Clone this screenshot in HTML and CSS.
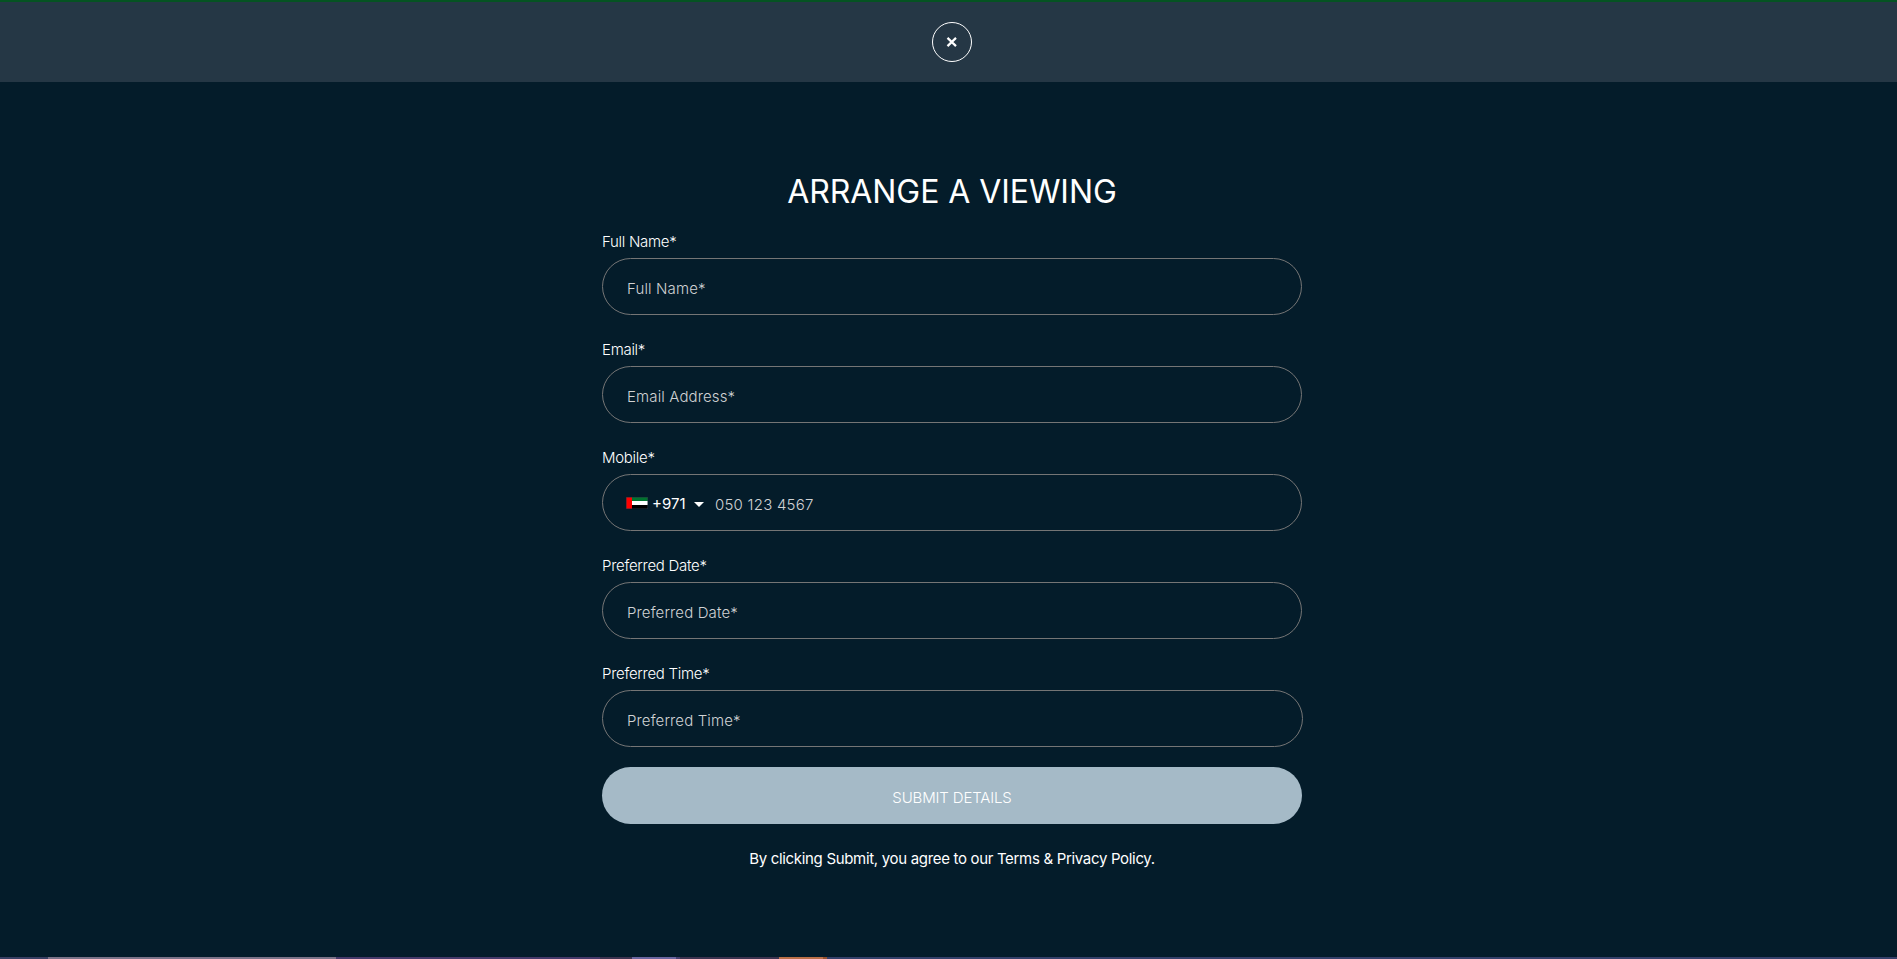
FILE: index.html
```html
<!DOCTYPE html>
<html lang="en">
<head>
<meta charset="utf-8">
<title>Arrange a Viewing</title>
<link rel="stylesheet" href="styles.css">
</head>
<body>
<header class="topbar">
  <button class="close" type="button" aria-label="Close">
    <svg width="12" height="12" viewBox="0 0 12 12"><path d="M1.500 1.900 10 10.100M10 1.900 1.500 10.100" stroke="#fff" stroke-width="2.200" fill="none"/></svg>
  </button>
</header>
<main class="panel">
  <h1 class="title"><span class="t-title">ARRANGE A VIEWING</span></h1>
  <form class="form">
    <div class="field">
      <label class="label">Full Name*</label>
      <div class="box"><span class="placeholder">Full Name*</span></div>
    </div>
    <div class="field">
      <label class="label">Email*</label>
      <div class="box"><span class="placeholder">Email Address*</span></div>
    </div>
    <div class="field">
      <label class="label">Mobile*</label>
      <div class="box phone">
        <svg class="flag" width="22" height="12" viewBox="0 0 22 12"><path fill="#26353f" d="M0 0h22v12H0z"/><path fill="#00732f" d="M6 .5h15.500v3.500H6z"/><path fill="#fff" d="M6 4h15.500v4H6z"/><path fill="#000" d="M6 8h15.500v3.500H6z"/><path fill="#f00" d="M.5.5H6v11H.5z"/></svg>
        <span class="code">+971</span>
        <svg class="caret" width="10" height="5" viewBox="0 0 10 5"><path fill="#fff" d="M0 0h10L5 5z"/></svg>
        <span class="placeholder number">050 123 4567</span>
      </div>
    </div>
    <div class="field">
      <label class="label">Preferred Date*</label>
      <div class="box"><span class="placeholder">Preferred Date*</span></div>
    </div>
    <div class="field">
      <label class="label">Preferred Time*</label>
      <div class="box wide"><span class="placeholder">Preferred Time*</span></div>
    </div>
    <button class="submit" type="button">SUBMIT DETAILS</button>
  </form>
  <p class="terms">By clicking Submit, you agree to our Terms &amp; Privacy Policy.</p>
</main>
<footer class="strip"></footer>
</body>
</html>
```
FILE: styles.css
```css
* { box-sizing: border-box; }
body {
  margin: 0;
  height: 959px;
  overflow: hidden;
  display: flex;
  flex-direction: column;
  background: #041c2a;
  color: #fff;
  font-family: Inter, "Liberation Sans", sans-serif;
  font-size: 15px;
  font-weight: 300;
}
.topbar {
  height: 82px;
  flex: none;
  padding: 20px 0 0 7px;
  display: flex;
  justify-content: center;
  background: #253745;
  border-top: 2px solid #055322;
}
.close {
  width: 40px;
  height: 40px;
  padding: 0;
  display: flex;
  align-items: center;
  justify-content: center;
  border: 1.500px solid #fff;
  border-radius: 50%;
  background: none;
}
.panel {
  flex: 1;
  padding: 89px 0 0 7px;
  display: flex;
  flex-direction: column;
  align-items: center;
}
.title {
  margin: 0;
  height: 57px;
  line-height: 41px;
  font-size: 32px;
  font-weight: 400;
  letter-spacing: -0.070px;
  white-space: nowrap;
}
.form { width: 700px; }
.field { height: 108px; }
.label {
  display: block;
  height: 30px;
  padding-top: 4px;
  line-height: 20px;
  letter-spacing: -0.290px;
  white-space: nowrap;
}
.box {
  height: 57px;
  padding: 4px 24px 0;
  display: flex;
  align-items: center;
  border: 1px solid #757575;
  border-radius: 29px;
  white-space: nowrap;
}
.wide { width: 701px; }
.placeholder { color: #d0d2d4; letter-spacing: 0.130px; }
.number { letter-spacing: 0.230px; }
.phone { padding-left: 23px; }
.flag { margin-top: -3px; }
.code { width: 35px; margin: -2px 0 0 4px; font-weight: 400; }
.caret { margin: -1px 11px 0 7px; }
.submit {
  display: flex;
  align-items: center;
  justify-content: center;
  width: 700px;
  height: 57px;
  margin-top: -1px;
  padding: 3px 0 0;
  border: 0;
  border-radius: 29px;
  background: #a5bac7;
  color: #fff;
  font: inherit;
  letter-spacing: -0.150px;
}
.terms {
  margin: 25px 0 0;
  line-height: 20px;
  font-weight: 400;
  letter-spacing: -0.320px;
  white-space: nowrap;
}
.strip {
  height: 2px;
  flex: none;
  background: linear-gradient(90deg, #383f63 48px, #7b7389 48px 336px, #45396a 336px 600px, #3c3350 600px 632px, #6a66a0 632px 676px, #453f70 676px 680px, #3c3350 680px 779px, #bb7048 779px 823px, #96522f 823px 827px, #34406a 827px);
}
```
